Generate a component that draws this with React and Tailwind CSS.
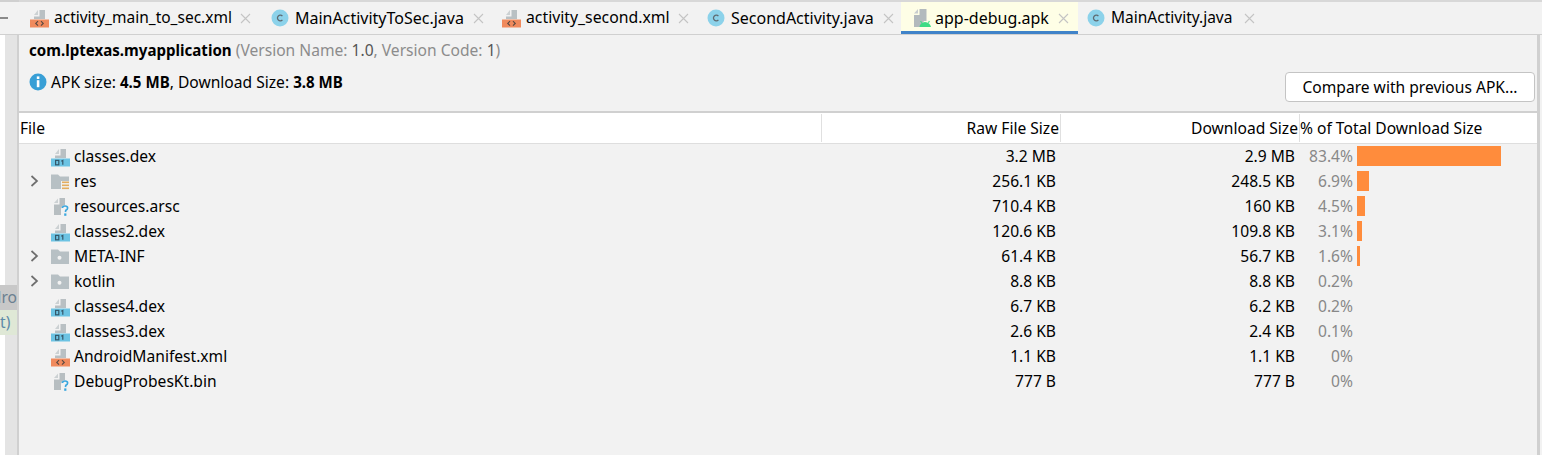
const FONT = "font-['Noto_Sans','Open_Sans',sans-serif]";

const tabs = [
  { name: "activity_main_to_sec.xml", icon: "xml", box: "w-[241px] pl-[11px] pr-[9.5px]", size: "text-[15.5px]" },
  { name: "MainActivityToSec.java", icon: "class", box: "w-[231px] pl-[11px] pr-[7.5px]", size: "text-[16px]" },
  { name: "activity_second.xml", icon: "xml", box: "w-[205px] pl-[11px] pr-[7.5px]", size: "text-[15.8px]" },
  { name: "SecondActivity.java", icon: "class", box: "w-[205px] pl-[11px] pr-[7.5px]", size: "text-[16px]" },
  { name: "app-debug.apk", icon: "apk", box: "w-[177px] pl-[13px] pr-[9.5px]", size: "text-[16px]", active: true },
  { name: "MainActivity.java", icon: "class", box: "w-[190px] pl-[9px] pr-[13.5px]", size: "text-[15.5px]" },
];

const rows = [
  { name: "classes.dex", icon: "dex", raw: "3.2 MB", dl: "2.9 MB", pct: "83.4%", bar: 144 },
  { name: "res", icon: "res", raw: "256.1 KB", dl: "248.5 KB", pct: "6.9%", bar: 12, arrow: true },
  { name: "resources.arsc", icon: "unknown", raw: "710.4 KB", dl: "160 KB", pct: "4.5%", bar: 8 },
  { name: "classes2.dex", icon: "dex", raw: "120.6 KB", dl: "109.8 KB", pct: "3.1%", bar: 5 },
  { name: "META-INF", icon: "folder", raw: "61.4 KB", dl: "56.7 KB", pct: "1.6%", bar: 3, arrow: true },
  { name: "kotlin", icon: "folder", raw: "8.8 KB", dl: "8.8 KB", pct: "0.2%", bar: 0, arrow: true },
  { name: "classes4.dex", icon: "dex", raw: "6.7 KB", dl: "6.2 KB", pct: "0.2%", bar: 0 },
  { name: "classes3.dex", icon: "dex", raw: "2.6 KB", dl: "2.4 KB", pct: "0.1%", bar: 0 },
  { name: "AndroidManifest.xml", icon: "xml", raw: "1.1 KB", dl: "1.1 KB", pct: "0%", bar: 0 },
  { name: "DebugProbesKt.bin", icon: "unknown", raw: "777 B", dl: "777 B", pct: "0%", bar: 0 },
];

function FileIcon({ type }) {
  if (type === "class") {
    return (
      <svg width="18" height="18" viewBox="0 0 18 18" className="mr-[1px] shrink-0">
        <circle cx="9" cy="9" r="8.5" fill="#8cd2ea" />
        <path d="M11.4 7.2a2.8 2.8 0 1 0 0 3.6" fill="none" stroke="#5f6b72" strokeWidth="1.3" />
      </svg>
    );
  }
  if (type === "xml" || type === "dex") {
    const band = type === "xml" ? "#f08a5d" : "#6cc3e3";
    return (
      <svg width="19" height="19" viewBox="0 0 19 19" className="shrink-0">
        <path d="M8 1 V6 H4 Z" fill="#ccd1d3" />
        <path d="M9.5 1 H15 V10 H4 V7.5 H9.5 Z" fill="#b9c0c3" />
        <rect x="0" y="10.5" width="19" height="8" fill={band} />
        {type === "xml" ? (
          <path d="M8 12.2 L5.8 14.4 L8 16.6 M11 12.2 L13.2 14.4 L11 16.6" fill="none" stroke="#5c4a42" strokeWidth="1.2" />
        ) : (
          <g fill="none" stroke="#35586a" strokeWidth="1.2">
            <rect x="4.6" y="12.4" width="3.2" height="4.4" />
            <path d="M10.2 13.2 L11.8 12.4 L11.8 16.8" />
          </g>
        )}
      </svg>
    );
  }
  if (type === "apk") {
    return (
      <svg width="19" height="20" viewBox="0 0 19 20" className="-ml-[1px] -mr-[2px] shrink-0">
        <path d="M5 1 V5.5 H1 Z" fill="#c8cdcf" />
        <path d="M6.5 1 H13.5 V13 H11 L7 19 H1 V7 H6.5 Z" fill="#b3babd" />
        <path d="M6.5 19 Q7 14.5 12 14 Q17 14.5 18 19 Z" fill="#3ddc84" />
        <path d="M8.6 14.8 L7.6 13 M15.4 14.8 L16.4 13" stroke="#3ddc84" strokeWidth="1.1" />
      </svg>
    );
  }
  if (type === "unknown") {
    return (
      <svg width="20" height="20" viewBox="0 0 20 20" className="shrink-0">
        <path d="M7 1.5 V6 H3 Z" fill="#ccd1d3" />
        <path d="M8.5 1 H14 V8 Q10.5 8.6 10 12 L10 18 H3 V7.5 H8.5 Z" fill="#b7bec1" />
        <path d="M11.4 11 Q11.6 9 14 9 Q16.6 9 16.6 11 Q16.6 12.6 14.8 13.4 L14.4 15" fill="none" stroke="#3aa7de" strokeWidth="1.7" />
        <rect x="13.2" y="16.4" width="2.2" height="2.4" fill="#3aa7de" />
      </svg>
    );
  }
  return (
    <svg width="18" height="16" viewBox="0 0 18 16" className="shrink-0">
      <path d="M0 0.5 H7 L9 2.5 H18 V15 H0 Z" fill="#b7c0c4" />
      {type === "folder" && <circle cx="8.5" cy="8.8" r="2" fill="#f2f2f2" />}
      {type === "res" && (
        <g>
          <rect x="10" y="7" width="8" height="9" fill="#f2f2f2" />
          <rect x="11" y="7.5" width="7" height="1.6" fill="#e3ad5f" />
          <rect x="11" y="10.5" width="7" height="1.6" fill="#e3ad5f" />
          <rect x="11" y="13.5" width="7" height="1.6" fill="#e3ad5f" />
        </g>
      )}
    </svg>
  );
}

function Arrow() {
  return (
    <svg width="9" height="12" viewBox="0 0 9 12">
      <path d="M1.5 1 L7 6 L1.5 11" fill="none" stroke="#6e6e6e" strokeWidth="1.7" />
    </svg>
  );
}

function CloseIcon() {
  return (
    <svg width="11" height="11" viewBox="0 0 11 11" className="shrink-0">
      <path d="M1 1 L10 10 M10 1 L1 10" stroke="#c4c4c4" strokeWidth="1.1" />
    </svg>
  );
}

function Tab({ tab }) {
  return (
    <div
      className={`flex h-full items-center gap-[5px] whitespace-nowrap ${tab.box} ${
        tab.active ? "border-b-[3px] border-[#4083c9] bg-[#fefee6] pt-[3px]" : ""
      }`}
    >
      <FileIcon type={tab.icon} />
      <span className={`leading-none text-black ${tab.size}`}>{tab.name}</span>
      <span className="ml-auto">
        <CloseIcon />
      </span>
    </div>
  );
}

function Row({ row }) {
  return (
    <div className="flex h-[25px] items-center text-[15.6px] text-black">
      <div className="flex w-[802px] items-center">
        <span className="flex w-[32px] justify-center pr-[1px]">{row.arrow && <Arrow />}</span>
        <span className="mt-[2px] flex w-[23px] justify-start">
          <FileIcon type={row.icon} />
        </span>
        <span>{row.name}</span>
      </div>
      <div className="w-[235px] text-right">{row.raw}</div>
      <div className="w-[239px] text-right">{row.dl}</div>
      <div className="ml-[5px] flex items-center">
        <span className="w-[53px] text-right text-[#888888]">{row.pct}</span>
        <span className="ml-[4px] -mt-[1px] h-[20px] bg-[#ff8c3c]" style={{ width: row.bar }} />
      </div>
    </div>
  );
}

export default function App() {
  return (
    <div className={`flex h-[455px] w-[1542px] overflow-hidden bg-[#f2f2f2] ${FONT}`}>
      {/* left gutter of the editor */}
      <div className="flex w-[19px] shrink-0 flex-col">
        <div className="flex h-[35px] items-center border-b border-[#d0d0d0] border-t-2">
          <span className="h-[2px] w-[8px] bg-[#8a8a8a]" />
        </div>
        <div className="flex flex-1 border-r-2 border-[#d0d0d0] bg-white pl-[5px]">
          <div className="flex w-[12px] flex-none flex-col bg-[#e4e4e4] pt-[250px] text-[15.6px] leading-[25px]">
            <div className="-ml-[5px] flex h-[25px] w-[17px] justify-end overflow-hidden bg-[#c8c8c8] text-[#6b7f90]">dro</div>
            <div className="-ml-[5px] h-[25px] w-[17px] overflow-hidden bg-[#dfe8d6] text-[#5e8aa8]">t)</div>
          </div>
        </div>
      </div>

      <div className="flex min-w-0 flex-1 flex-col">
        {/* tabs */}
        <div className="flex h-[35px] shrink-0 items-center border-t-2 border-b border-[#d0d0d0] border-t-[#d8d8d8]">
          {tabs.map((tab) => (
            <Tab key={tab.name} tab={tab} />
          ))}
        </div>

        <div className="mr-[2px] flex min-h-0 flex-1 flex-col border-r-[3px] border-[#d0d0d0]">
          {/* apk summary */}
          <div className="relative h-[78px] shrink-0 border-b-2 border-[#d0d0d0] pl-[10px] pt-[5px] text-[15.6px] leading-[20px]">
            <div>
              <b className="text-[15.1px] font-bold text-black">com.lptexas.myapplication</b>{" "}
              <span className="text-[#8c8c8c]">
                (Version Name: <span className="text-[#555555]">1.0</span>, Version Code:{" "}
                <span className="text-[#555555]">1</span>)
              </span>
            </div>
            <div className="mt-[12px] flex items-center gap-[4px] text-black">
              <svg width="18" height="18" viewBox="0 0 18 18">
                <circle cx="9" cy="9" r="8.5" fill="#389fd6" />
                <rect x="7.8" y="3.4" width="2.6" height="2.6" fill="#fff" />
                <rect x="7.8" y="7.2" width="2.6" height="7" fill="#fff" />
              </svg>
              <span>
                APK size: <b className="text-[15.1px]">4.5 MB</b>, Download Size: <b className="text-[15.1px]">3.8 MB</b>
              </span>
            </div>
            <button className="absolute right-[2px] top-[37px] h-[30px] w-[250px] rounded-[4px] border border-[#c4c4c4] bg-white text-[15.6px] text-black">
              Compare with previous APK...
            </button>
          </div>

          {/* table header */}
          <div className="flex h-[31px] shrink-0 items-center border-b border-[#dedede] bg-white text-[15.6px] text-black">
            <div className="h-[28px] w-[803px] border-r border-[#e0e0e0] pl-[1px] leading-[28px]">File</div>
            <div className="h-[28px] w-[239px] border-r border-[#e0e0e0] pr-[1px] text-right leading-[28px]">Raw File Size</div>
            <div className="h-[28px] w-[239px] border-r border-[#e0e0e0] pr-[1px] text-right leading-[28px]">Download Size</div>
            <div className="whitespace-nowrap leading-[28px]">% of Total Download Size</div>
          </div>

          {/* rows */}
          <div>
            {rows.map((row) => (
              <Row key={row.name} row={row} />
            ))}
          </div>
        </div>
      </div>
    </div>
  );
}
